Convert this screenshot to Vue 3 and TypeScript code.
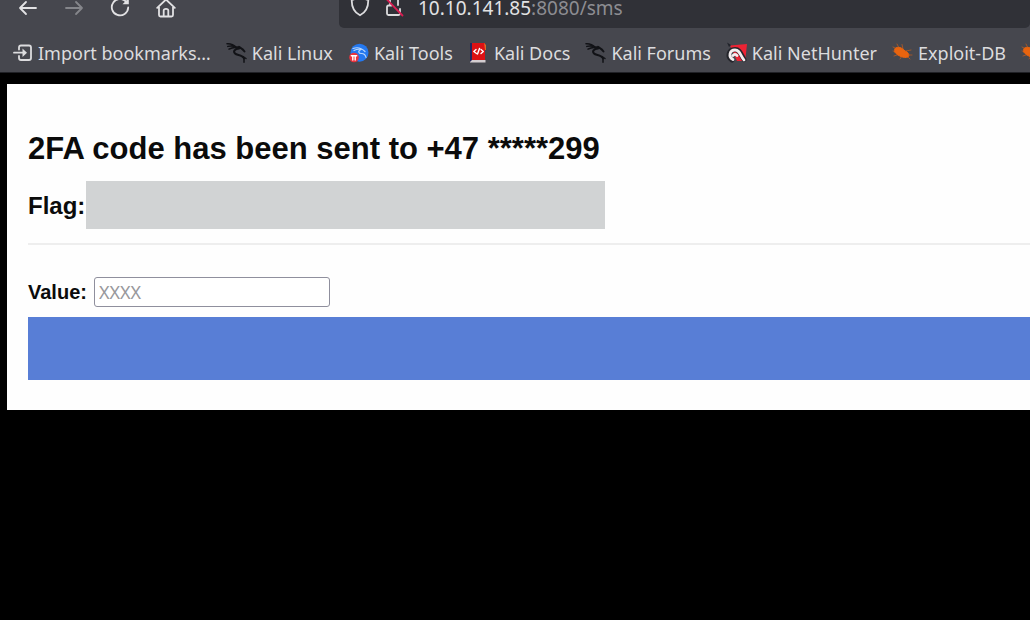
<script setup lang="ts">
import { ref } from 'vue'

interface Bookmark {
  label: string
  icon: 'import' | 'dragon' | 'tools' | 'docs' | 'hunter' | 'bug'
}

const bookmarks: Bookmark[] = [
  { label: 'Import bookmarks…', icon: 'import' },
  { label: 'Kali Linux', icon: 'dragon' },
  { label: 'Kali Tools', icon: 'tools' },
  { label: 'Kali Docs', icon: 'docs' },
  { label: 'Kali Forums', icon: 'dragon' },
  { label: 'Kali NetHunter', icon: 'hunter' },
  { label: 'Exploit-DB', icon: 'bug' },
  { label: '', icon: 'bug' },
]

const code = ref('')
</script>

<template>
  <div class="window">
    <header class="chrome">
      <nav class="toolbar" aria-label="Navigation">
        <button class="tool" type="button" aria-label="Back">
          <svg class="icon" viewBox="0 0 20 20"><path d="M18 9H2M8 3L2 9L8 15" /></svg>
        </button>
        <button class="tool" type="button" aria-label="Forward" disabled>
          <svg class="icon" viewBox="0 0 20 20"><path d="M2 9H18M12 3L18 9L12 15" /></svg>
        </button>
        <button class="tool" type="button" aria-label="Reload">
          <svg class="icon" viewBox="0 0 20 20">
            <path d="M16.5 3.2A8.2 8.2 0 1 0 18.2 8.5" />
            <path class="solid" d="M18.8 -1V5.3H12.5Z" />
          </svg>
        </button>
        <button class="tool" type="button" aria-label="Home">
          <svg class="icon" viewBox="0 0 20 20">
            <path d="M1.2 8.8L10 0.5L18.8 8.8M3 8V16Q3 17.5 4.5 17.5H15.5Q17 17.5 17 16V8M7.7 17V11.5Q7.7 9.8 10 9.8T12.3 11.5V17" />
          </svg>
        </button>
        <div class="address">
          <svg class="icon" viewBox="0 0 20 20"><path d="M10 -1L18.3 2.2C18.3 10 15.5 14.5 10 17.3C4.5 14.5 1.7 10 1.7 2.2Z" /></svg>
          <svg class="icon" viewBox="0 0 20 20">
            <path d="M6 6V2A4 4 0 0 1 14 2V7M7.5 7.5H4.5Q3 7.5 3 9V15.5Q3 17 4.5 17H14.5Q16 17 16 15.5V11" />
            <path class="strike" d="M1 -0.5L18.5 17.5" />
          </svg>
          <span class="url"><span class="host">10.10.141.85</span>:8080/sms</span>
        </div>
      </nav>
      <nav class="bookmarks" aria-label="Bookmarks">
        <a v-for="(item, i) in bookmarks" :key="i" class="bookmark" href="#">
          <svg v-if="item.icon === 'import'" class="icon" viewBox="0 0 20 20">
            <path d="M6 6.5V4.5Q6 2.5 8 2.5H16Q18 2.5 18 4.5V15Q18 17 16 17H8Q6 17 6 15V13M1 9.7H10" />
            <path class="solid" d="M9.5 5.5L14 9.7L9.5 14Z" />
          </svg>
          <svg v-else-if="item.icon === 'dragon'" class="icon dragon" viewBox="0 0 20 20">
            <path d="M0 .8C4 .5 7 2 9.5 4.5M.8 3.4C4 2.5 7 3 9.5 4.5M2 6.2C4.5 4.6 7 4.2 9.5 4.5" />
            <path class="body" d="M9 4.5C12 3.8 14.5 4.4 17.5 8.5M12 5.5C7.5 6 6 8.5 8 10.5C10 12.5 15.5 11.5 17 15.5" />
            <path d="M12 3.5L13.5 4.5M17 15V19.3M16 13.5L19 15.5" />
          </svg>
          <svg v-else-if="item.icon === 'tools'" class="icon" viewBox="0 0 20 20">
            <circle cx="10.5" cy="9.7" r="9" fill="#2478ef" stroke="none" />
            <path class="curl" d="M4 5.5C8 4 12 4.5 16 8.5M5 7.5C8 6 10 6 12 6.5C8.5 8 9.5 10.5 12.5 10.5C15 10.5 16.5 12 17 14.5" />
            <circle cx="5" cy="14.5" r="4.8" fill="#e9333d" stroke="none" />
            <path class="mark" d="M2.3 12.8H7.7M3.8 12.8V17M6.2 12.8V17" />
          </svg>
          <svg v-else-if="item.icon === 'docs'" class="icon" viewBox="0 0 20 20">
            <path d="M1 0H4V17L1 19Z" fill="#24265e" stroke="none" />
            <path d="M3 0H16V17H3Z" fill="#dd1114" stroke="none" />
            <path d="M15 0L17 2V7H16Z" fill="#dc6b24" stroke="none" />
            <path d="M1 19L3 17H16.5V19.5H1Z" fill="#d4cdd0" stroke="none" />
            <path class="mark" d="M7 6.5L4.8 8.5L7.5 10.5M8.5 11L10.5 5.5M12 6.5L14.3 8.5L12 10.5" />
          </svg>
          <svg v-else-if="item.icon === 'hunter'" class="icon" viewBox="0 0 20 20">
            <path d="M3 2.5L20 1L18.5 15L17 18L10 18Z" fill="#ed2334" stroke="none" />
            <path d="M0 -.5L4 2L2 4Z" fill="#20232a" stroke="none" />
            <path class="hook-edge" d="M5 17C0 14 1.5 6.5 8 6.5C13 6.5 13.5 11 17 16.5" />
            <path class="hook" d="M6 16.5C1 14 2.5 7 8 7C13 7 13 12 17 17M6 12.5C7 11 9 11 10 12.5" />
          </svg>
          <svg v-else class="icon bug" viewBox="0 0 20 20">
            <path class="fill" d="M2 5.5C5 3 9 4.5 12 8C15 9 17 12 15 14C11 15.5 5 13 2 9.5Z" />
            <path class="legs" d="M4 1L6 5M9 1.5L10 6M0 8L4 9M1 13L7 11M7 16L9 13M13 8L18 7M15 12L19 12M14 13L17 16M0 4L4 6" />
          </svg>
          <span v-if="item.label">{{ item.label }}</span>
        </a>
      </nav>
    </header>

    <main class="sheet">
      <h1>2FA code has been sent to +47 *****299</h1>
      <div class="flag">
        <h2>Flag:</h2>
        <div class="redacted"></div>
      </div>
      <hr />
      <form @submit.prevent>
        <div class="field">
          <label for="code">Value:</label>
          <input id="code" v-model="code" type="text" placeholder="XXXX" />
        </div>
        <button class="submit" type="submit" aria-label="Submit"></button>
      </form>
    </main>
  </div>
</template>

<style>
body {
  background: #000;
}
</style>

<style scoped>
.window {
  overflow: hidden;
  font-family: "Liberation Sans", Arial, sans-serif;
  color: #0b0b0b;
}
.chrome {
  background: #46474e;
  border-bottom: 1px solid #202126;
  font-family: "Noto Sans", sans-serif;
  color: #dcdcde;
}
.toolbar {
  display: flex;
  align-items: flex-end;
  height: 28px;
  padding-left: 5px;
  overflow: hidden;
}
.tool {
  display: flex;
  flex: none;
  align-items: center;
  justify-content: center;
  width: 46px;
  height: 38px;
  padding: 0;
  border: 0;
  background: none;
  color: #e2e2e4;
}
.tool:disabled {
  color: #85868b;
}
.icon {
  flex: none;
  width: 20px;
  height: 20px;
  overflow: visible;
  fill: none;
  stroke: currentColor;
  stroke-width: 1.8;
  stroke-linecap: round;
  stroke-linejoin: round;
}
.icon .solid {
  fill: currentColor;
  stroke: none;
}
.icon .strike {
  stroke: #d81e52;
}
.address {
  display: flex;
  flex: 1;
  align-items: center;
  gap: 14px;
  box-sizing: border-box;
  height: 38px;
  margin-left: 150px;
  padding: 0 0 2px 11px;
  border-radius: 5px;
  background: #303137;
}
.url {
  font-size: 19px;
  line-height: 16px;
  color: #8d8d92;
  white-space: nowrap;
}
.host {
  color: #e2e2e4;
}
.bookmarks {
  display: flex;
  align-items: center;
  gap: 16px;
  box-sizing: border-box;
  height: 44px;
  padding: 6px 0 0 13px;
}
.bookmark {
  display: flex;
  flex: none;
  align-items: center;
  gap: 5px;
  font-size: 18px;
  line-height: 26px;
  color: inherit;
  text-decoration: none;
  white-space: nowrap;
}
.dragon {
  color: #111216;
  stroke-width: 1.5;
}
.dragon .body {
  stroke-width: 2;
}
.curl {
  stroke: #b9d7fb;
  stroke-width: 1.2;
}
.mark {
  stroke: #fff;
  stroke-width: 1.4;
}
.hook-edge {
  stroke: #24252b;
  stroke-width: 5;
}
.hook {
  stroke: #f3eef0;
  stroke-width: 2.8;
}
.bug {
  color: #e9640f;
  stroke-width: 1;
}
.bug .fill {
  fill: currentColor;
}
.bug .legs {
  opacity: 0.55;
}
.sheet {
  margin: 11px 0 0 7px;
  padding: 47px 0 30px 21px;
  background: #fefefe;
}
h1 {
  margin: 0 0 14px;
  font-size: 31px;
  line-height: 36px;
  white-space: nowrap;
}
.flag {
  display: flex;
  align-items: center;
  gap: 1px;
}
h2 {
  margin: 0;
  padding-top: 2px;
  font-size: 24px;
  line-height: 28px;
}
.redacted {
  width: 519px;
  height: 48px;
  background: #d1d3d4;
}
hr {
  height: 2px;
  margin: 14px 0 32px;
  border: 0;
  background: #eee;
}
.field {
  display: flex;
  align-items: center;
  gap: 7px;
  margin-bottom: 10px;
}
label {
  font-size: 20px;
  font-weight: bold;
  line-height: 24px;
}
input {
  box-sizing: border-box;
  width: 236px;
  height: 30px;
  padding: 0 4px;
  border: 1px solid #8f8f9d;
  border-radius: 3px;
  background: #fff;
  font-family: "Noto Sans", sans-serif;
  font-size: 18px;
  color: #111;
}
input::placeholder {
  color: #98989c;
  opacity: 1;
}
.submit {
  display: block;
  width: 100%;
  height: 63px;
  border: 0;
  background: #587ed6;
}
</style>
